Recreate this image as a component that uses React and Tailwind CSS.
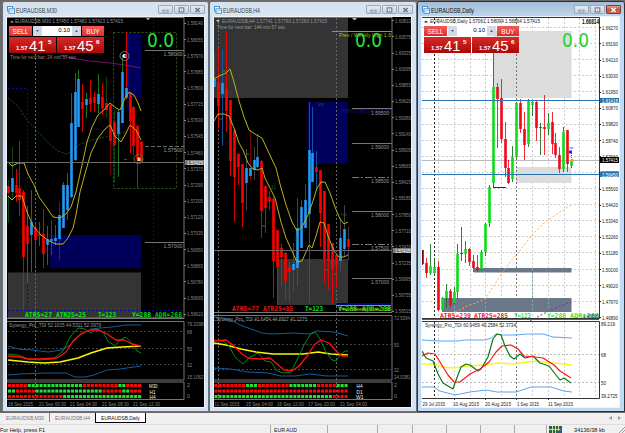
import React from "react";

const FONT = '"Liberation Sans", Arial, sans-serif';
const MONO = '"DejaVu Sans Mono", "Liberation Mono", monospace';
const TAHOMA = '"DejaVu Sans", "Open Sans", sans-serif';

// Candle rows: [wickTop, wickBottom, bodyTop, bodyBottom, body, wick]
const M30 = [
  [180, 223, 186, 193, "r", "d"], [147, 200, 178, 192, "b", "d"], [169, 202, 185, 193, "r", "r"],
  [141, 216, 188, 200, "r", "r"], [190, 310, 192, 257, "r", "r"], [206, 283, 226, 244, "r", "g"],
  [190, 272, 222, 235, "b", "g"], [223, 266, 228, 240, "r", "r"], [222, 246, 234, 236, "r", "g"],
  [209, 268, 234, 254, "r", "r"], [226, 265, 239, 245, "b", "g"], [220, 255, 239, 241, "b", "r"],
  [225, 245, 238, 241, "b", "g"], [202, 260, 215, 239, "b", "d"], [182, 228, 185, 228, "b", "g"],
  [173, 220, 185, 210, "b", "g"], [93, 198, 123, 197, "b", "g"], [73, 161, 92, 160, "b", "g"],
  [70, 127, 79, 127, "b", "g"], [84, 132, 102, 109, "r", "r"], [93, 118, 99, 105, "b", "g"],
  [80, 112, 98, 104, "r", "r"], [92, 112, 97, 103, "r", "r"], [74, 113, 94, 104, "b", "g"],
  [83, 115, 97, 108, "r", "r"], [77, 118, 103, 110, "r", "d"], [103, 175, 105, 141, "r", "k"],
  [111, 183, 122, 145, "r", "d"], [110, 177, 112, 134, "b", "g"], [55, 123, 72, 123, "b", "g"],
  [32, 100, 88, 98, "b", "r"], [92, 153, 93, 121, "r", "r"], [106, 155, 107, 146, "r", "r"],
  [125, 188, 126, 159, "r", "r"], [141, 163, 142, 162, "r", "r"],
];
const H4 = [
  [53, 87, 79, 87, "b", "w"], [48, 129, 82, 106, "r", "r"], [50, 146, 83, 94, "b", "u"],
  [31, 132, 89, 111, "r", "r"], [100, 176, 100, 161, "r", "r"], [130, 222, 130, 177, "r", "r"],
  [153, 185, 154, 167, "r", "r"], [164, 227, 164, 203, "r", "r"], [149, 210, 168, 183, "b", "w"],
  [131, 181, 168, 176, "b", "k"], [147, 180, 160, 170, "b", "w"], [134, 168, 157, 167, "b", "w"],
  [160, 238, 161, 211, "r", "r"], [186, 233, 186, 208, "r", "r"], [191, 210, 197, 201, "r", "r"],
  [197, 298, 199, 261, "r", "r"], [230, 305, 230, 267, "r", "r"], [244, 285, 248, 257, "r", "r"],
  [252, 301, 253, 281, "r", "r"], [262, 302, 267, 272, "r", "r"], [243, 292, 264, 270, "b", "r"],
  [198, 286, 228, 268, "b", "u"], [200, 248, 207, 248, "b", "u"], [184, 228, 200, 228, "b", "u"],
  [102, 303, 150, 214, "b", "u"], [107, 182, 153, 182, "b", "u"], [151, 188, 167, 172, "r", "u"],
  [170, 247, 170, 213, "r", "r"], [191, 284, 191, 259, "r", "r"], [224, 290, 224, 261, "r", "r"],
  [243, 303, 243, 269, "r", "r"], [255, 288, 255, 265, "r", "r"], [218, 271, 238, 261, "b", "w"],
  [205, 257, 229, 249, "b", "w"], [227, 260, 239, 247, "r", "w"],
];
const DAILY = [
  [250, 265, 250, 264, "k", "k"], [258, 278, 263, 273, "r", "r"], [244, 275, 266, 273, "g", "d"],
  [258, 275, 267, 273, "g", "d"], [261, 311, 267, 310, "r", "r"], [297, 311, 298, 310, "g", "d"],
  [284, 308, 291, 298, "g", "d"], [289, 308, 291, 305, "r", "r"], [287, 304, 292, 303, "g", "d"],
  [244, 298, 254, 292, "g", "d"], [227, 261, 253, 254, "d", "d"], [241, 263, 249, 254, "g", "d"],
  [248, 266, 249, 262, "r", "r"], [255, 272, 261, 268, "r", "r"], [255, 272, 267, 270, "r", "r"],
  [250, 270, 252, 269, "g", "d"], [223, 256, 224, 252, "g", "d"], [185, 227, 187, 223, "g", "d"],
  [53, 187, 87, 183, "g", "d"], [83, 148, 87, 99, "r", "r"], [79, 143, 98, 139, "r", "r"],
  [122, 177, 139, 168, "r", "r"], [160, 184, 168, 183, "r", "r"], [146, 182, 157, 179, "g", "d"],
  [102, 158, 103, 157, "g", "d"], [99, 133, 103, 129, "r", "r"], [112, 160, 129, 145, "r", "r"],
  [99, 147, 101, 144, "g", "d"], [101, 116, 102, 105, "g", "d"], [101, 141, 102, 128, "r", "r"],
  [123, 155, 127, 128, "d", "d"], [95, 155, 127, 129, "r", "r"], [113, 135, 123, 129, "g", "d"],
  [112, 154, 122, 144, "r", "r"], [133, 158, 143, 155, "r", "r"], [147, 173, 155, 169, "r", "r"],
  [127, 172, 132, 169, "g", "d"], [130, 172, 130, 164, "r", "r"], [159, 168, 161, 166, "g", "d"],
];

const DARK = { r: "#ff0000", b: "#2299f5", g: "#1a8a22", d: "#124f18", k: "#850606", w: "#4c4c4c", u: "#1262ad" };
const LIGHT = { r: "#f00818", g: "#0ddb1c", d: "#0b6a18", k: "#7c0a16" };

function Candles({ rows, x0, step, colors }) {
  return rows.map(([wt, wb, bt, bb, c, w], i) => {
    const x = Math.round(x0 + i * step - 0.4);
    return (
      <g key={i}>
        <rect x={x} y={wt} width="1" height={wb - wt} fill={colors[w]} opacity="0.85" />
        <rect x={x - 0.8} y={bt} width="2.6" height={Math.max(1, bb - bt)} fill={colors[c]} />
      </g>
    );
  });
}

function T({ x, y, w, s = 5.8, fill, children, bold, font = FONT }) {
  return (
    <text x={x} y={y} fontSize={s} fill={fill} fontFamily={font} fontWeight={bold ? 700 : 400} textLength={w} lengthAdjust="spacingAndGlyphs">
      {children}
    </text>
  );
}

function Stat({ x, y, w, fill, children }) {
  return <T x={x} y={y} w={w} s={6.6} fill={fill} bold font={MONO}>{children}</T>;
}

function Axis({ x, labels, y0, step, fill }) {
  return labels.map((l, i) => (
    <g key={i}>
      <rect x={x} y={Math.round(y0 + i * step)} width="2" height="1" fill={fill} />
      {l && <T x={x + 3} y={y0 + i * step + 2.4} w={16} s={5.6} fill={fill}>{l}</T>}
    </g>
  ));
}

function Line({ pts, c, w = 1, dash }) {
  return <polyline points={pts} fill="none" stroke={c} strokeWidth={w} strokeDasharray={dash} strokeLinejoin="round" />;
}

// Each string holds one square per bar, g for up and r for down
function Squares({ x, y, code }) {
  return code.split("").map((c, i) => (
    <rect key={i} x={x + i * 3.94} y={y} width="3.1" height="3.1" fill={c === "g" ? "#22df32" : "#fb0505"} />
  ));
}

function ControlButton({ kind, active }) {
  const close = kind === "close";
  const look = active && close
    ? "border-[#78403a] bg-linear-to-b from-[#dea08f] via-[#c9533b] to-[#c76d52]"
    : "border-[#9babba] bg-linear-to-b from-[#e2ebf4] to-[#c5d3e3]";
  const ink = active && close ? "#fff" : "#67727f";
  return (
    <div className={"flex h-[9px] w-[15px] items-center justify-center rounded-[1px] border " + look}>
      <svg width="7" height="6" viewBox="0 0 7 6">
        {kind === "min" && <rect x="1" y="3.2" width="5" height="1.8" fill="#fff" stroke={ink} strokeWidth=".7" />}
        {kind === "max" && <rect x="1.2" y=".9" width="4.6" height="4" fill="#fff" stroke={ink} strokeWidth="1.1" />}
        {kind === "max" && <rect x="3" y="2.4" width="1.2" height="1" fill={ink} />}
        {close && <path d="M1.4 1l4.2 4M5.6 1L1.4 5" stroke={ink} strokeWidth="1.5" />}
      </svg>
    </div>
  );
}

function TradePanel() {
  const sides = [["41", "5"], ["45", "6"]];
  return (
    <div className="absolute top-[9px] left-[2px] flex w-[95px] flex-col gap-px text-white" style={{ fontFamily: FONT }}>
      <div className="flex h-[10px] items-stretch">
        <div className="w-[23px] bg-linear-to-b from-[#f35a55] to-[#dc2d2b] text-center text-[6.5px] leading-[11px]">SELL</div>
        <div className="mx-px flex flex-1 bg-white text-[6px] leading-[9px] text-black">
          <div className="flex w-[9px] items-center justify-center bg-[#d3dae6]">
            <svg width="3" height="2"><path d="M0 0h3L1.5 2z" fill="#3d5c96" /></svg>
          </div>
          <div className="flex-1 pr-[2px] text-right">0.10</div>
          <div className="flex w-[9px] items-center justify-center bg-[#d3dae6]">
            <svg width="3" height="2"><path d="M0 2h3L1.5 0z" fill="#3d5c96" /></svg>
          </div>
        </div>
        <div className="w-[22px] bg-linear-to-b from-[#f35a55] to-[#dc2d2b] text-center text-[6.5px] leading-[11px]">BUY</div>
      </div>
      <div className="flex h-[16px] gap-px">
        {sides.map(([big, sup]) => (
          <div key={big} className="flex-1 bg-linear-to-b from-[#d62929] to-[#ac0505]">
            <svg width="47" height="16" viewBox="0 0 47 16" className="block">
              <T x={7} y={13.3} w={11.5} s={6.2} fill="#fff" bold>1.57</T>
              <T x={20} y={13.5} w={16.5} s={15} fill="#fff">{big}</T>
              <T x={39} y={6.6} w={3.5} s={6} fill="#fff" bold>{sup}</T>
            </svg>
          </div>
        ))}
      </div>
    </div>
  );
}

function ChartWindow({ title, titleWidth, active, trade, size = "w-[208px]", children }) {
  return (
    <section
      className={
        "flex h-[411px] shrink-0 flex-col rounded-t-[3px] border pb-[3px] pl-[3px] " + size +
        (active ? " border-[#26343e] bg-[#bfdaf2]" : " border-[#65717d] bg-[#d5e3f1]")
      }
    >
      <header
        className={
          "-ml-[3px] flex h-[14px] shrink-0 items-center rounded-t-[3px] pt-px pr-[3px] pl-[4px] " +
          (active ? "bg-linear-to-b from-[#a3bdd7] to-[#bed6ed]" : "bg-linear-to-b from-[#d5e1ed] to-[#d8e5f2]")
        }
      >
        <svg width="8" height="8" viewBox="0 0 8 8">
          <rect x=".5" y=".5" width="5" height="4.5" fill="#f5faff" stroke="#4b91ce" />
          <rect x="2" y="2.8" width="5.5" height="4.5" fill="#fff" stroke="#4b91ce" />
          <path d="M3 5.8l1.2-1.3 1 .8 1.5-1.5" fill="none" stroke="#4b91ce" strokeWidth=".7" />
        </svg>
        <svg width="60" height="12" className="ml-px flex-none">
          <T x={0} y={8.6} w={titleWidth} s={7} fill={active ? "#111" : "#39444f"}>{title}</T>
        </svg>
        <div className="ml-auto flex gap-px">
          <ControlButton kind="min" active={active} />
          <ControlButton kind="max" active={active} />
          <ControlButton kind="close" active={active} />
        </div>
      </header>
      <div className={"relative h-[392px] w-[199px] shrink-0 overflow-hidden border border-[#eef4fa] " + (active ? "bg-white" : "bg-black")}>
        {children}
        {trade && <TradePanel />}
      </div>
    </section>
  );
}

function SubFrames({ x, right, split = 318.5, next = 321.5 }) {
  return (
    <g fill="none" stroke="#777">
      <path d={`M${x} 17.5H${right}V${split}H${x}`} />
      <path d={`M${x} ${next}H${right}V380H${x}`} />
      <path d={`M${x} 382H${right}V399.5H${x}`} />
    </g>
  );
}

function M30Chart() {
  const g = "#858585";
  return (
    <svg viewBox="7 17 197 390" width="197" height="390" className="block">
      <rect x="126" y="33" width="15" height="64.5" fill="#00005c" />
      <rect x="50" y="235" width="91" height="33" fill="#00005c" />
      <rect x="8" y="272.5" width="133" height="46" fill="#343434" />
      <path d="M35.5 18V399" stroke="#666" strokeDasharray="2 2" />
      <path d="M27.5 89V310M8 88.5h19.5M153.5 18V318M8 310.5h176M128 33V115" stroke="#0808a0" strokeDasharray="2 2" fill="none" />
      <rect x="113.5" y="32.5" width="63" height="156" fill="none" stroke="#315a12" strokeDasharray="2 2" />
      <Line pts="60,55 70,58 90,61 110,63 125,65 141,68" c="#74116f" />
      <Line pts="8,98 18,106 27,120 40,134 50,145 58,151 67,154 73,150 80,144 92,140 105,137 115,136 126,131" c="#15561b" dash="2 1.5" />
      <Candles rows={M30} x0={8.1} step={3.93} colors={DARK} />
      <Line pts="8,162 12,166 18,163 24,163 28,174 34,185 39,197 47,208 53,217 60,218 66,214 71,207 76,192 82,165 87,142 92,127 98,115 104,110 110,103 116,108 120,110 125,98 129,92 134,95 138,103 141,111" c="#b8b31b" />
      <Line pts="8,196 12,200 16,196 22,196 27,212 33,226 41,235 49,241 56,244 63,244 68,238 73,228 76,215 80,192 86,170 91,153 98,138 105,129 110,125 115,136 121,142 125,135 130,125 136,130 141,140" c="#b8b31b" />
      <path d="M7 162.5h177" stroke="#6c6c6c" />
      <circle cx="124.5" cy="56" r="4.5" fill="none" stroke="#777" />
      <circle cx="124.5" cy="56" r="2" fill="#fff" /><circle cx="125.3" cy="56" r="1" fill="#113cff" />
      <circle cx="138.5" cy="159" r="4.5" fill="none" stroke="#765" />
      <rect x="137.5" y="157.5" width="3" height="3.5" fill="#ffe14d" />
      <rect x="124" y="159" width="3" height="1" fill="#e00" />
      <path d="M145 50.5h39M145 242.5h39" stroke="#777" />
      <path d="M145 146.5h39" stroke="#666" strokeDasharray="4 2" />
      <T x={163.5} y={56} w={19} fill="#999">1.58000</T>
      <T x={163.5} y={152} w={19} fill="#999">1.57500</T>
      <T x={163.5} y={248} w={19} fill="#999">1.57000</T>
      <path d="M10 22.5l2-2 2 2zM146 18h4l-2 2.5z" fill="#aaa" />
      <T x={15} y={23.2} w={108} fill="#999">EURAUDSB,M30  1.57450 1.57481 1.57413 1.57415</T>
      <T x={10} y={59.2} w={66} fill="#888">Time for next bar: 24 min 57 sec</T>
      <T x={147} y={47} w={27} s={20} fill="#25e23b" font={TAHOMA}>0.0</T>
      <SubFrames x={7} right={184} />
      <path d="M8 317.5h175" stroke="#5b6410" />
      <Stat x={25} y={317} w={27} fill="#00f014">ATR5=27</Stat>
      <Stat x={56} y={317} w={30} fill="#00f014">ATR25=25</Stat>
      <Stat x={98} y={317} w={18} fill="#00f014">T=123</Stat>
      <Stat x={132} y={317} w={19} fill="#00f014">Y=288</Stat>
      <Stat x={155} y={317} w={27} fill="#00c814">ADR=268</Stat>
      <Axis x={184} y0={23} step={16.15} fill={g} labels={["1.58140", "1.58055", "1.57970", "1.57885", "1.57800", "1.57715", "1.57630", "1.57545", "1.57460", "1.57375", "1.57290", "1.57205", "1.57120", "1.57035", "1.56950", "1.56865", "1.56780", "1.56695", "1.56610"]} />
      <rect x="185" y="160" width="19" height="5" fill="#777" />
      <T x={187} y={164.8} w={16} s={5.5} fill="#fff">1.57415</T>
      <path d="M8 331.5h176M8 348.5h176M8 364.5h176" stroke="#444" strokeDasharray="2 2" />
      <Line pts="8,346 18,349 32,350 48,352 61,350 70,345 80,335 91,329 100,328 112,327 125,325 141,325" c="#145b9c" />
      <Line pts="8,375 20,374 45,373 66,373 75,377 85,377 94,375 107,370 120,369 141,366" c="#145b9c" />
      <Line pts="8,360 28,362 44,363 60,362 78,358 91,353 107,348 122,347 141,346" c="#f7f700" w="1.5" />
      <Line pts="8,354 18,355 28,359 39,360 53,359 63,351 70,337 78,328 85,329 91,333 95,329 103,332 108,341 115,346 119,341 125,337 130,341 137,351 141,353" c="#078715" />
      <Line pts="8,356 20,357 28,359 40,359 57,358 66,352 73,341 82,333 90,330 99,330 107,334 116,340 124,340 132,344 141,346" c="#ff1010" w="1.3" />
      <T x={9} y={326.8} w={92} fill="#999">Synergy_Pro_TDI 52.1015 44.5311 52.3979</T>
      <T x={187} y={326} w={16.5} fill={g}>79.3298</T><T x={187} y={333.5} w={5} fill={g}>68</T>
      <T x={187} y={350.5} w={5} fill={g}>50</T><T x={187} y={366.5} w={5} fill={g}>32</T>
      <T x={187} y={379} w={16.5} fill={g}>15.1062</T><T x={187} y={387} w={3} fill={g}>2</T><T x={187} y={398} w={3} fill={g}>0</T>
      <Squares x={8} y={384} code="rrrrrggggggggggggggrrrrrrrrrggrrrr" />
      <Squares x={8} y={389.5} code="ggrrrrrgggggggggggggggggrrrrrggrrr" />
      <Squares x={8} y={395} code="rrrrrrrrrrrrrrgggggggggggggggggggg" />
      <T x={149} y={387.7} w={8.5} fill="#eee">M30</T><T x={149.5} y={393.5} w={6} fill="#eee">H1</T><T x={149.5} y={399.3} w={6} fill="#eee">H4</T>
      <T x={8} y={405.5} w={25} fill={g}>18 Sep 2015</T><T x={39} y={405.5} w={27} fill={g}>21 Sep 00:30</T>
      <T x={70} y={405.5} w={27} fill={g}>21 Sep 04:30</T><T x={102} y={405.5} w={27} fill={g}>21 Sep 08:30</T>
      <T x={133} y={405.5} w={27} fill={g}>21 Sep 12:30</T>
    </svg>
  );
}

function H4Chart() {
  const g = "#858585";
  return (
    <svg viewBox="214 17 197 390" width="197" height="390" className="block">
      <rect x="214" y="18" width="134" height="80" fill="#343434" />
      <rect x="308" y="102" width="40" height="62" fill="#00005c" />
      <rect x="277" y="259" width="71" height="46" fill="#343434" />
      <path d="M218.5 18V399M336.5 18V399" stroke="#666" strokeDasharray="2 2" />
      <Candles rows={H4} x0={214.6} step={3.93} colors={DARK} />
      <Line pts="214,79 219,76 226,73 230,69 234,82 239,101 244,117 249,130 255,134 262,138 268,151 276,168 280,184 286,205 292,222 297,231 302,227 308,215 313,201 317,188 321,182 325,182 330,193 335,207 340,219 344,224 348,222" c="#b8b31b" />
      <Line pts="214,121 218,114 224,114 229,116 234,128 239,143 243,150 248,163 253,169 258,170 262,168 265,178 270,188 275,198 281,222 286,238 292,251 297,262 302,261 306,252 309,245 312,248 316,236 320,222 324,223 328,236 334,251 339,257 344,257 348,255" c="#b8b31b" />
      <path d="M214 250.5h178" stroke="#6c6c6c" />
      <path d="M332 31.5h60" stroke="#8aa51b" />
      <T x={339} y={37} w={52} fill="#9cc51a">Prev / Weekly High 1.6</T>
      <path d="M338 109.5h54" stroke="#08087e" />
      <T x={341} y={113} w={50} fill="#101086">Prev / Daily High 1.59</T>
      <path d="M352 108.5h40M352 143.5h40M352 211.5h40M352 278.5h40" stroke="#777" />
      <path d="M352 177.5h40M352 244.5h40" stroke="#777" strokeDasharray="7 2 2 2" />
      <T x={371} y={115} w={18} fill="#999">1.59500</T><T x={371} y={149} w={18} fill="#999">1.59000</T>
      <T x={371} y={182.5} w={18} fill="#999">1.58500</T><T x={371} y={216.5} w={18} fill="#999">1.58000</T>
      <T x={371} y={250} w={18} fill="#999">1.57500</T><T x={371} y={284} w={18} fill="#999">1.57000</T>
      <path d="M216 20h4l-2 2.5zM352 18h5l-2.5 2.5z" fill="#bbb" />
      <T x={222} y={23} w={105} fill="#999">EURAUDSB,H4  1.57741 1.57760 1.57260 1.57415</T>
      <T x={217} y={29} w={68} fill="#999">Time for next bar: 144 min 57 sec</T>
      <T x={355} y={47} w={27} s={20} fill="#25e23b" font={TAHOMA}>0.0</T>
      <g fill="#126a18" fontSize="5" fontFamily={FONT}><text x="318" y="106">vo</text><text x="271" y="189">11</text><text x="295" y="241">x</text><text x="341" y="216">no</text></g>
      <path d="M219 119h3M223 71h3M246 154h3M262 226h3M325 270h3M334 274h3" stroke="#109020" />
      <rect x="336" y="303" width="55" height="2" fill="#000080" /><path d="M336 305.5h55" stroke="#98aa10" />
      <SubFrames x={214} right={392} split={312.5} next={315.5} />
      <Stat x={232} y={311} w={27} fill="#f51515">ATR5=77</Stat>
      <Stat x={263} y={311} w={30} fill="#f51515">ATR25=85</Stat>
      <Stat x={305} y={311} w={18} fill="#00f014">T=123</Stat>
      <Stat x={338} y={311} w={19} fill="#00d814">Y=288</Stat>
      <Stat x={362} y={311} w={29} fill="#00d814">ADR=268</Stat>
      <T x={339} y={311} w={52} fill="#b4d71c">Prev/Weekly Low 1.56</T>
      <Axis x={392} y0={20.3} step={16.15} fill={g} labels={["1.60810", "1.60575", "1.60335", "1.60095", "1.59855", "1.59620", "1.59380", "1.59140", "1.58905", "1.58665", "1.58425", "1.58185", "1.57950", "1.57710", "1.57470", "1.57235", "1.56995", "1.56755", "1.56515"]} />
      <rect x="393" y="248" width="18" height="5" fill="#777" />
      <T x={395} y={252.7} w={15.5} s={5.5} fill="#fff">1.57415</T>
      <path d="M214 320.5h178M214 344.5h178M214 369.5h178" stroke="#444" strokeDasharray="2 2" />
      <Line pts="214,317 224,318 231,320 240,325 251,329 262,333 272,334 294,333 309,334 317,331 334,332 348,336" c="#145b9c" />
      <Line pts="214,368 230,369 248,372 268,373 281,376 295,376 310,374 327,376 348,376" c="#145b9c" />
      <Line pts="214,343 226,345 241,349 256,352 273,354 303,354 318,352 331,354 348,355" c="#f7f700" w="1.5" />
      <Line pts="214,340 223,341 229,346 235,357 243,364 249,358 258,353 265,361 271,362 277,371 284,373 291,372 297,360 304,345 310,335 315,332 320,339 326,352 332,360 336,361 341,354 345,351 348,351" c="#078715" />
      <Line pts="214,341 226,340 233,345 242,354 248,358 260,359 270,358 276,363 284,370 292,371 299,366 308,355 314,345 321,340 329,343 336,351 342,356 348,356" c="#ff1010" w="1.3" />
      <T x={216} y={320.5} w={91} fill="#999">Synergy_Pro_TDI 41.6454 44.6927 41.1275</T>
      <T x={394} y={319.5} w={16} fill={g}>72.5394</T><T x={394} y={346.5} w={5} fill={g}>50</T><T x={394} y={371.5} w={5} fill={g}>32</T>
      <T x={394} y={379} w={16.5} fill={g}>24.0381</T><T x={394} y={387} w={3} fill={g}>2</T><T x={394} y={398} w={3} fill={g}>0</T>
      <Squares x={214.5} y={384} code="rrrrrrrrgggrrrrrrrrgggggggrrrrrggg" />
      <Squares x={214.5} y={389.5} code="rrrrrrrrrrrrrrrrrrrrrrrrrrrrrrrrrr" />
      <Squares x={214.5} y={395} code="ggggggggggggggggggggggggggggggrrrr" />
      <T x={356.5} y={387.7} w={6} fill="#eee">H4</T><T x={356.5} y={393.5} w={6} fill="#eee">D1</T><T x={356} y={399.3} w={7.5} fill="#eee">W1</T>
      <T x={214.5} y={405.5} w={25} fill={g}>11 Sep 2015</T><T x={246} y={405.5} w={27} fill={g}>15 Sep 04:00</T>
      <T x={277} y={405.5} w={27} fill={g}>16 Sep 12:00</T><T x={308} y={405.5} w={27} fill={g}>17 Sep 20:00</T>
      <T x={340} y={405.5} w={27} fill={g}>21 Sep 04:00</T>
    </svg>
  );
}

function DailyChart() {
  const k = "#222";
  const vs = [438.5, 454.5, 470.5, 485.5, 501.5, 532.5, 548.5, 564.5, 579.5, 595.5];
  return (
    <svg viewBox="422 17 197 390" width="197" height="390" className="block">
      {vs.map((x) => <path key={x} d={`M${x} 18V398`} stroke="#ccc" strokeDasharray="2 2" />)}
      {Array.from({ length: 18 }, (_, i) => <path key={i} d={`M422 ${Math.round(27 + i * 16.1) + 0.5}h177`} stroke="#ccc" strokeDasharray="2 2" />)}
      <rect x="494" y="31" width="77.5" height="67" fill="#dcdcdc" />
      <rect x="516" y="167" width="55.5" height="16" fill="#dcdcdc" />
      <rect x="474" y="268" width="97.5" height="4.5" fill="#6b7889" />
      <rect x="442" y="298" width="129.5" height="14" fill="#6b7889" />
      <path d="M454.5 298v14M485.5 298v14M532.5 268v44M548.5 298v14" stroke="#7ba9ae" strokeDasharray="2 2" />
      <path d="M434.5 18V398" stroke="#222" strokeDasharray="2 2" /><path d="M516.5 18V398" stroke="#777" strokeDasharray="2 2" />
      <path d="M422 160.5h177" stroke="#bbb" />
      <Candles rows={DAILY} x0={422.6} step={3.92} colors={LIGHT} />
      <path d="M422 100.5h177M422 174.5h177" stroke="#2674b1" />
      <path d="M493 187.5h13" stroke="#751018" />
      <Line pts="444,317 458,311 467,306 476,303 486,298 493,287 500,276 510,262 521,249 533,234 545,222 560,212 571,205" c="#ffac48" dash="2 2" />
      <Line pts="530,321 543,314 557,307 571,302" c="#941fa0" dash="2 2" />
      <rect x="569.5" y="147" width="4" height="2" fill="#a6adff" /><rect x="569" y="150.5" width="3" height="3" fill="#1425ff" />
      <path d="M571.5 153v6" stroke="#36b" strokeDasharray="1 1" /><circle cx="572.5" cy="160.5" r="1.5" fill="#ff9b1b" />
      <path d="M424 22.5l2-2 2 2z" fill="#222" />
      <T x={430} y={23} w={110} fill={k}>EURAUDSB,Daily  1.57061 1.58094 1.56864 1.57415</T>
      <T x={582} y={23.5} w={17} s={6.5} fill="#111" bold>1.66814</T>
      <T x={562} y={47} w={27} s={20} fill="#1fd130" font={TAHOMA}>0.0</T>
      <g fill="none" stroke="#333"><path d="M422 17.5h177.5V318.5H422M422 321.5h177.5V398.5H422" /><path d="M422 319.5h177" stroke="#526273" /></g>
      <Stat x={440} y={317.5} w={31} fill="#f51515">ATR5=239</Stat>
      <Stat x={474} y={317.5} w={34} fill="#f51515">ATR25=285</Stat>
      <Stat x={514} y={317.5} w={17} fill="#22f030">T=123</Stat>
      <Stat x={547} y={317.5} w={19} fill="#22f030">Y=288</Stat>
      <Stat x={570} y={317.5} w={29} fill="#22f030">ADR=268</Stat>
      <T x={583} y={317.5} w={16} s={5.5} fill="#123c1a">1.46890</T>
      <Axis x={599} y0={27.3} step={16.12} fill={k} labels={["1.66270", "1.65190", "1.64110", "1.63030", "1.61950", "1.60870", "1.59820", "1.58740", "1.57660", "1.56580", "1.55500", "1.54420", "1.53340", "1.52260", "1.51180", "1.50100", "1.49020", "1.47970", "1.46890"]} />
      <rect x="600" y="98" width="19" height="5" fill="#2674b1" /><T x={602} y={102.5} w={16} s={5.5} fill="#fff">1.61418</T>
      <rect x="600" y="157" width="19" height="6" fill="#000" /><T x={602} y={162} w={16} s={5.5} fill="#fff">1.57415</T>
      <rect x="600" y="171.5" width="19" height="5.5" fill="#2674b1" /><T x={602} y={176.5} w={16} s={5.5} fill="#fff">1.56450</T>
      <path d="M422 354.5h177M422 382.5h177" stroke="#bbb" strokeDasharray="2 2" />
      <Line pts="422,340 440,341 457,341 465,340 485,340 491,338 496,334 503,335 515,335 527,334 543,334 553,337 572,338" c="#5aa5f1" />
      <Line pts="422,387 434,387 440,391 455,395 470,392 486,390 497,392 516,392 531,387 551,387 564,391 572,392" c="#5aa5f1" />
      <Line pts="422,364 435,364 442,367 454,368 467,366 485,365 498,363 514,364 535,361 553,363 572,365" c="#fbf51e" w="1.4" />
      <Line pts="422,351 426,358 433,361 438,374 443,383 453,389 455,383 461,367 466,364 470,365 478,371 481,369 488,357 493,339 497,334 501,335 505,346 510,356 514,359 520,354 525,358 533,356 540,363 549,366 556,375 560,380 564,378 571,383" c="#087813" w="1.2" />
      <Line pts="422,356 428,353 435,354 440,362 448,375 454,382 460,382 470,374 480,369 489,362 496,352 502,346 511,345 518,349 524,356 535,357 543,358 554,365 560,371 571,378" c="#ff1212" w="1.2" />
      <T x={425} y={327} w={91} fill={k}>Synergy_Pro_TDI 60.9459 49.2584 52.3734</T>
      <T x={601} y={326} w={14} fill={k}>89.219</T><T x={601} y={356.5} w={5} fill={k}>68</T><T x={601} y={384.5} w={5} fill={k}>50</T><T x={601} y={398} w={16.5} fill={k}>39.2725</T>
      <path d="M454.5 398v2M485.5 398v2M516.5 398v2M548.5 398v2" stroke="#333" />
      <T x={422.5} y={405.5} w={22.5} fill={k}>29 Jul 2015</T><T x={453} y={405.5} w={26} fill={k}>10 Aug 2015</T>
      <T x={485} y={405.5} w={26} fill={k}>20 Aug 2015</T><T x={517} y={405.5} w={22} fill={k}>1 Sep 2015</T>
      <T x={548} y={405.5} w={25} fill={k}>11 Sep 2015</T>
    </svg>
  );
}

function Label({ w, fill, children, s = 6 }) {
  return (
    <svg width={w} height="9" className="block flex-none">
      <T x={0} y={6.7} w={w} s={s} fill={fill}>{children}</T>
    </svg>
  );
}

export default function App() {
  return (
    <div className="flex h-[433px] w-[625px] flex-col overflow-hidden bg-[#f0f0f0]" style={{ fontFamily: TAHOMA }}>
      <main className="flex h-[413px] shrink-0 bg-[#6d6969] pt-px pl-[2px]">
        <ChartWindow title="EURAUDSB,M30" titleWidth={41} size="w-[207px]" trade><M30Chart /></ChartWindow>
        <ChartWindow title="EURAUDSB,H4" titleWidth={37}><H4Chart /></ChartWindow>
        <ChartWindow title="EURAUDSB,Daily" titleWidth={43} active trade><DailyChart /></ChartWindow>
      </main>
      <nav className="flex h-[11px] items-start bg-[#f1eff0]">
        <div className="flex w-[50px] justify-center border-r border-[#888]"><Label w={38} fill="#777">EURAUDSB,M30</Label></div>
        <div className="flex w-[45px] justify-center"><Label w={35} fill="#777">EURAUDSB,H4</Label></div>
        <div className="flex h-[10px] w-[51px] justify-center border border-t-0 border-black bg-white"><Label w={39} fill="#111">EURAUDSB,Daily</Label></div>
        <div className="ml-auto flex gap-[6px] pt-[3px] pr-[4px]">
          <svg width="3" height="4"><path d="M3 0v4L0 2z" fill="#999" /></svg>
          <svg width="3" height="4"><path d="M0 0v4l3-2z" fill="#999" /></svg>
        </div>
      </nav>
      <footer className="flex h-[9px] items-center border-t border-[#ddd] bg-[#f0f0f0]">
        <div className="w-[270px]"><Label w={45} fill="#111">For Help, press F1</Label></div>
        <div className="h-[8px] w-[57px] border-l border-[#aaa] pl-[3px]"><Label w={23} fill="#111">EUR AUD</Label></div>
        <div className="h-[8px] w-[50px] border-l border-[#aaa]" />
        <div className="h-[8px] w-[35px] border-l border-[#aaa]" />
        <div className="h-[8px] w-[34px] border-l border-[#aaa]" />
        <div className="h-[8px] w-[34px] border-l border-[#aaa]" />
        <div className="h-[8px] w-[34px] border-l border-[#aaa]" />
        <div className="h-[8px] w-[32px] border-l border-[#aaa]" />
        <div className="flex h-[8px] flex-1 items-center border-l border-[#aaa] pl-[2px]">
          <svg width="13" height="7">
            <rect width="13" height="7" fill="#236344" />
            <path d="M0 3.5h13M3.5 0v7M6.5 0v7M9.5 0v7" stroke="#d5de8c" />
            <path d="M7 7h6V2z" fill="#285d80" />
          </svg>
          <div className="ml-[12px]"><Label w={31} fill="#111">34136/38 kb</Label></div>
          <svg width="7" height="7" className="ml-auto"><path d="M1 7l6-6M4 7l3-3" stroke="#999" /></svg>
        </div>
      </footer>
    </div>
  );
}
